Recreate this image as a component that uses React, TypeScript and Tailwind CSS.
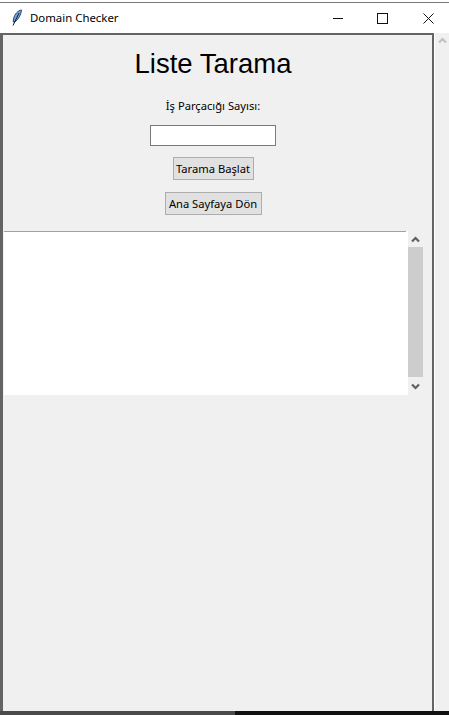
export default function App() {
  const ui = { fontFamily: '"Noto Sans", sans-serif' };
  return (
    <div className="w-[449px] h-[715px] flex flex-col overflow-hidden bg-white" style={ui}>
      <div className="h-[2px] bg-white shrink-0" />
      <div className="h-px bg-[#7a7a7a] shrink-0" />
      <div className="h-[30px] shrink-0 flex items-center bg-white">
        <svg width="12" height="18" viewBox="0 0 12 18" className="ml-[11px]">
          <path d="M10.5 1C7 1.5 3.5 5 2.5 10L2.2 13L4.5 12.5C7.5 10 10 6 10.5 1Z" fill="#6ea6e6" stroke="#24364f" strokeWidth="0.9" />
          <path d="M8 4L2 16.5" stroke="#1a1a1a" strokeWidth="1" />
        </svg>
        <span className="ml-[7px] text-[11.4px] text-black leading-none">Domain Checker</span>
        <div className="ml-auto flex items-center">
          <svg width="46" height="30" viewBox="0 0 46 30"><path d="M12 15.5H22" stroke="#111" strokeWidth="1" /></svg>
          <svg width="46" height="30" viewBox="0 0 46 30"><rect x="10.5" y="10.5" width="10" height="10" fill="none" stroke="#111" strokeWidth="1" /></svg>
          <svg width="36" height="30" viewBox="0 0 36 30"><path d="M10.5 10.5L20.5 20.5M20.5 10.5L10.5 20.5" stroke="#111" strokeWidth="1" /></svg>
        </div>
      </div>
      <div className="flex-1 flex min-h-0">
        <div className="flex-1 flex flex-col min-w-0 bg-[#f0f0f0] border-t-2 border-l-[3px] border-r-2 border-[#646464]">
          <div className="flex flex-col items-center pr-[9px]">
            <h1 className="mt-[13px] text-[27.5px] leading-[32px] text-black font-normal whitespace-nowrap" style={{ fontFamily: '"Liberation Sans", Arial, sans-serif' }}>Liste Tarama</h1>
            <div className="mt-[18px] text-[11.2px] leading-[16px] text-black whitespace-nowrap">İş Parçacığı Sayısı:</div>
            <input className="mt-[11px] w-[126px] h-[21px] bg-white border border-[#7a7a7a] outline-none" />
            <button className="mt-[11px] h-[23px] w-[81px] bg-[#e1e1e1] border border-[#adadad] text-[11.2px] text-black leading-none whitespace-nowrap">Tarama Başlat</button>
            <button className="mt-[12px] h-[23px] w-[97px] bg-[#e1e1e1] border border-[#adadad] text-[11.2px] text-black leading-none whitespace-nowrap">Ana Sayfaya Dön</button>
          </div>
          <div className="mt-[16px] flex h-[164px] pl-px">
            <div className="w-[404px] bg-white">
              <div className="w-[402px] h-px bg-[#a0a0a0]" />
            </div>
            <div className="w-[15px] flex flex-col">
              <div className="h-[16px] flex items-center justify-center">
                <svg width="9" height="7" viewBox="0 0 9 7"><path d="M1 5.5L4.5 2L8 5.5" fill="none" stroke="#606060" strokeWidth="2.2" /></svg>
              </div>
              <div className="h-[130px] bg-[#cdcdcd]" />
              <div className="h-[18px] flex items-center justify-center">
                <svg width="9" height="7" viewBox="0 0 9 7"><path d="M1 1.5L4.5 5L8 1.5" fill="none" stroke="#606060" strokeWidth="2.2" /></svg>
              </div>
            </div>
          </div>
        </div>
        <div className="w-[14px] ml-px shrink-0 bg-[#f0f0f0] flex flex-col items-center">
          <svg width="9" height="7" viewBox="0 0 9 7" className="mt-[4px]"><path d="M1 5.5L4.5 2L8 5.5" fill="none" stroke="#c2c2c2" strokeWidth="2.2" /></svg>
        </div>
      </div>
      <div className="h-[4px] shrink-0 flex">
        <div className="w-[235px] bg-[#4b4b4b]" />
        <div className="flex-1 bg-[#111111]" />
      </div>
    </div>
  );
}
